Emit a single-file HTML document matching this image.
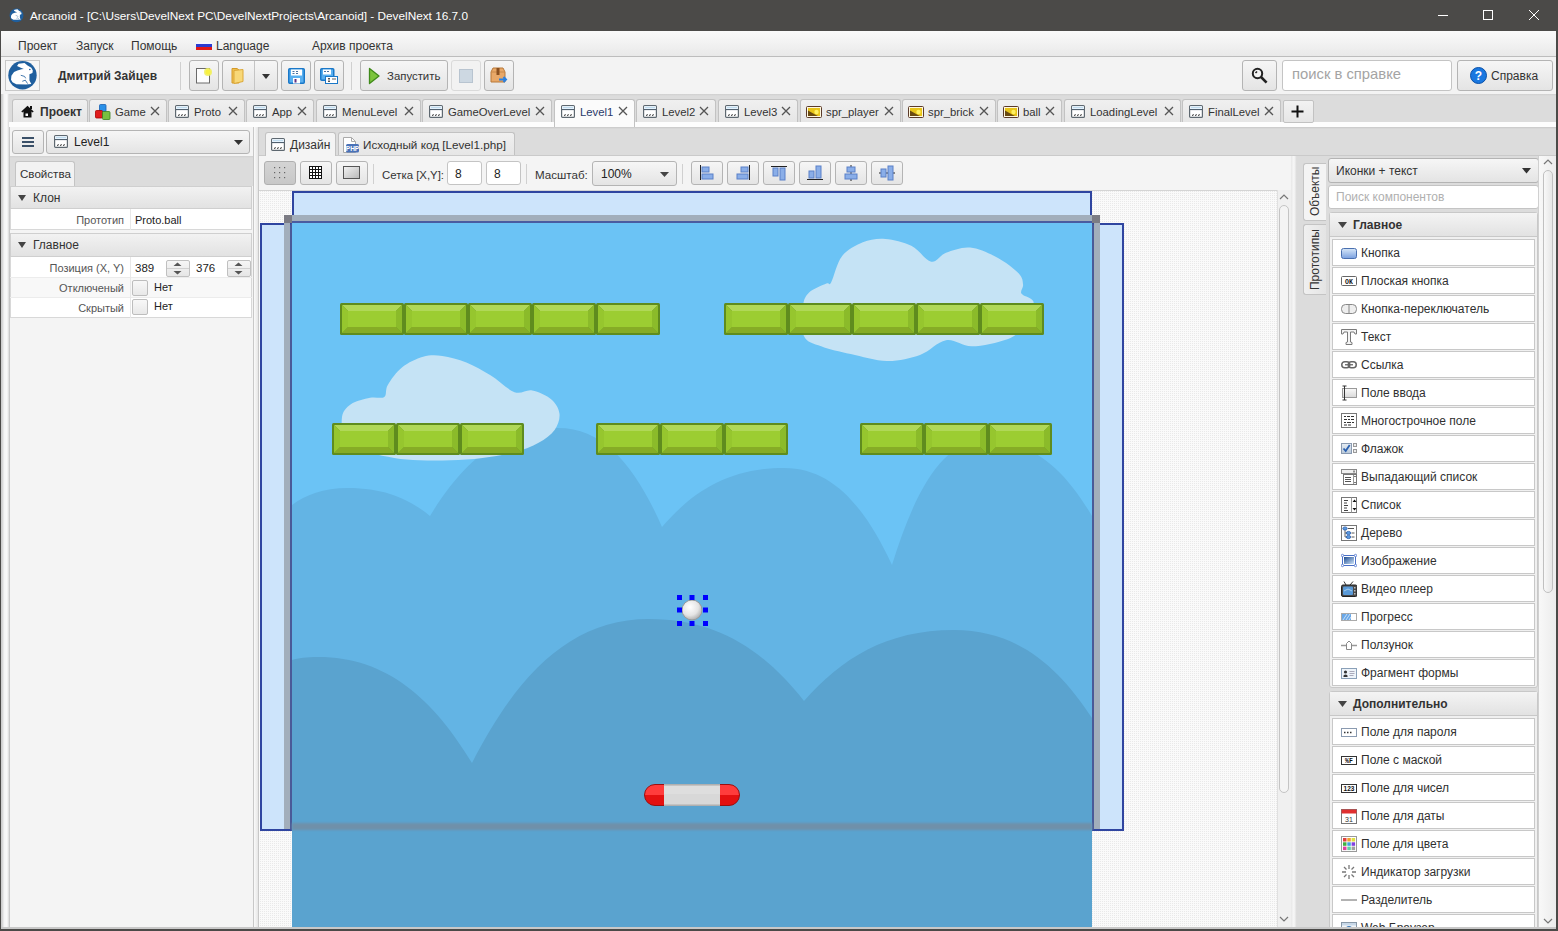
<!DOCTYPE html><html><head><meta charset="utf-8"><style>

*{box-sizing:border-box;margin:0;padding:0}
html,body{width:1558px;height:931px;overflow:hidden;background:#f4f4f4;font-family:"Liberation Sans", sans-serif;font-size:12px;color:#222}
div,span,svg.a{position:absolute}
.t{white-space:nowrap;line-height:16px}
.btn{border:1px solid #b4b4b4;border-radius:3px;background:linear-gradient(#f6f6f6,#e4e4e4)}
.tab{border:1px solid #c2c2c2;border-bottom:none;border-radius:3px 3px 0 0;background:linear-gradient(#f0f0f0,#e6e6e6)}
.inp{border:1px solid #c4c4c4;border-radius:3px;background:#fff}
.item{border:1px solid #c8c8c8;background:#fff}

</style></head><body>
<div style="left:0px;top:0px;width:1558px;height:31px;background:#4b4a48"></div>
<svg class="a" style="left:8px;top:7px" width="18" height="17" viewBox="0 0 984 931"><circle cx="465" cy="460" r="378" fill="#1f5f9e"/><path d="M320 210 L360 150 L520 130 L600 200 L700 260 L740 330 L730 400 L650 430 L650 600 L700 690 L560 705 L300 695 L200 645 L160 580 L170 470 L240 370 L330 330 L440 300 L500 290 L420 260Z" fill="#fff"/><circle cx="660" cy="305" r="22" fill="#1f5f9e"/><path d="M420 460 L520 490 L550 540 M460 620 L540 590 L600 680" stroke="#1f5f9e" stroke-width="22" fill="none"/></svg>
<div class="t" style="left:30px;top:8px;width:600px;height:16px;color:#fff;font-size:11.8px">Arcanoid - [C:\Users\DevelNext PC\DevelNextProjects\Arcanoid] - DevelNext 16.7.0</div>
<svg class="a" style="left:1436px;top:9px" width="120" height="14" viewBox="0 0 120 14"><line x1="2" y1="6.5" x2="12" y2="6.5" stroke="#fff" stroke-width="1"/><rect x="47.5" y="1.5" width="9" height="9" fill="none" stroke="#fff"/><path d="M93 1L103 11M103 1L93 11" stroke="#fff" stroke-width="1"/></svg>
<div style="left:0px;top:31px;width:1px;height:900px;background:#4b4a48"></div>
<div style="left:1557px;top:31px;width:1px;height:900px;background:#4b4a48"></div>
<div style="left:0px;top:929px;width:1558px;height:2px;background:#4b4a48"></div>
<div style="left:1px;top:31px;width:1556px;height:26px;background:linear-gradient(#fafafa,#e9e9e9);border-bottom:1px solid #bdbdbd"></div>
<div class="t" style="left:18px;top:38px;width:200px;height:14px;color:#333">Проект</div>
<div class="t" style="left:76px;top:38px;width:200px;height:14px;color:#333">Запуск</div>
<div class="t" style="left:131px;top:38px;width:200px;height:14px;color:#333">Помощь</div>
<div class="t" style="left:216px;top:38px;width:200px;height:14px;color:#333">Language</div>
<div class="t" style="left:312px;top:38px;width:200px;height:14px;color:#333">Архив проекта</div>
<svg class="a" style="left:196px;top:42px" width="16" height="8" viewBox="0 0 16 8"><rect width="16" height="2" y="0" fill="#f4f4ff"/><rect width="16" height="3" y="2" fill="#2a3ad0"/><rect width="16" height="3" y="5" fill="#e01818"/></svg>
<div style="left:1px;top:57px;width:1556px;height:37px;background:#f3f3f3"></div>
<div style="left:5px;top:60px;width:35px;height:31px;border:1px solid #c8c8c8;background:#f6f6f6"></div>
<svg class="a" style="left:5px;top:58px" width="37" height="35" viewBox="0 0 984 931"><circle cx="465" cy="460" r="378" fill="#1f5f9e"/><path d="M320 210 L360 150 L520 130 L600 200 L700 260 L740 330 L730 400 L650 430 L650 600 L700 690 L560 705 L300 695 L200 645 L160 580 L170 470 L240 370 L330 330 L440 300 L500 290 L420 260Z" fill="#fff"/><circle cx="660" cy="305" r="22" fill="#1f5f9e"/><path d="M420 460 L520 490 L550 540 M460 620 L540 590 L600 680" stroke="#1f5f9e" stroke-width="22" fill="none"/></svg>
<div class="t" style="left:58px;top:68px;width:120px;height:16px;font-weight:bold;color:#333;font-size:12px">Дмитрий Зайцев</div>
<div style="left:180px;top:62px;width:1px;height:28px;background:#d0d0d0"></div>
<div style="left:351px;top:62px;width:1px;height:28px;background:#d0d0d0"></div>
<div class="btn" style="left:189px;top:60px;width:30px;height:31px;"></div>
<div class="btn" style="left:281px;top:60px;width:30px;height:31px;"></div>
<div class="btn" style="left:314px;top:60px;width:30px;height:31px;"></div>
<div class="btn" style="left:484px;top:60px;width:30px;height:31px;"></div>
<div class="btn" style="left:222px;top:60px;width:56px;height:31px;"></div>
<div style="left:254px;top:61px;width:1px;height:29px;background:#c4c4c4"></div>
<svg class="a" style="left:262px;top:74px" width="8" height="5"><path d="M0 0h8L4 5z" fill="#333"/></svg>
<div class="btn" style="left:360px;top:60px;width:88px;height:31px;"></div>
<svg class="a" style="left:368px;top:67px" width="13" height="18" viewBox="0 0 13 18"><path d="M1.5 1.5L11 9L1.5 16.5Z" fill="#7cc43c" stroke="#3f8a1a" stroke-width="1.3" stroke-linejoin="round"/></svg>
<div class="t" style="left:387px;top:68px;width:60px;height:16px;color:#333;font-size:11.4px">Запустить</div>
<div style="left:451px;top:60px;width:30px;height:31px;border:1px solid #dadada;border-radius:3px;background:#f2f2f2"></div>
<div style="left:459px;top:69px;width:14px;height:14px;background:#cdd8e2;border:1px solid #b8c4d0"></div>
<svg class="a" style="left:195px;top:67px" width="19" height="17" viewBox="0 0 19 17"><rect x="1.5" y="1.5" width="13" height="14.5" fill="#fdfdfd" stroke="#6a6a6a"/><circle cx="13" cy="5" r="4" fill="#f0f060" opacity="0.9"/><circle cx="13" cy="5" r="2.5" fill="#f8f040"/></svg>
<svg class="a" style="left:231px;top:67px" width="14" height="17" viewBox="0 0 14 17"><path d="M1 1.5h5l2 1.5v13H1z" fill="#f0c050" stroke="#d49a28"/><path d="M3 3.5l9-1v12l-9 2z" fill="#f8d878" stroke="#dca838"/></svg>
<svg class="a" style="left:288px;top:68px" width="17" height="16" viewBox="0 0 17 16"><rect x="0.75" y="0.75" width="15.5" height="14.5" rx="1" fill="#5ab0f0" stroke="#1a78c8" stroke-width="1.5"/><rect x="3" y="1.5" width="11" height="6" fill="#fff"/><path d="M4.5 3.5h2M8 3.5h2M4.5 5.5h2M8 5.5h2" stroke="#4a70a0"/><rect x="5" y="10" width="7" height="5.5" fill="#fff"/><rect x="6.5" y="11" width="2" height="3.5" fill="#603080"/></svg>
<svg class="a" style="left:320px;top:68px" width="18" height="16" viewBox="0 0 18 16"><rect x="0.75" y="0.75" width="13" height="11.5" rx="1" fill="#5ab0f0" stroke="#1a78c8" stroke-width="1.5"/><rect x="3" y="1.5" width="8" height="5" fill="#fff"/><path d="M4 3.5h2M7 3.5h2" stroke="#4a70a0"/><rect x="5.5" y="8.5" width="12" height="7" fill="#fff" stroke="#1a78c8"/><path d="M8 10.5h2M9 10.5v3M8 13.5h2M12 11h4" stroke="#333" stroke-width="0.8"/></svg>
<svg class="a" style="left:490px;top:67px" width="18" height="17" viewBox="0 0 18 17"><path d="M1 5L3 1H13L15 5V15H1Z" fill="#e8a868" stroke="#b87838"/><path d="M1 5H15" stroke="#c88848"/><rect x="6.5" y="1" width="3" height="7" fill="#8a5020"/><path d="M9 12.5H16M13.5 10L16 12.5L13.5 15" stroke="#2a80e0" stroke-width="2" fill="none"/></svg>
<div class="btn" style="left:1242px;top:60px;width:35px;height:31px;"></div>
<svg class="a" style="left:1251px;top:67px" width="18" height="18" viewBox="0 0 18 18"><circle cx="6.5" cy="6.5" r="4.7" fill="#f4f4f4" stroke="#222" stroke-width="2"/><path d="M4.5 6l1.5-1.5" stroke="#222" stroke-width="1.6"/><path d="M10 10l5.6 5.6" stroke="#222" stroke-width="2.6"/></svg>
<div class="inp" style="left:1282px;top:60px;width:170px;height:31px;"></div>
<div class="t" style="left:1292px;top:65px;width:150px;height:18px;color:#a4a4a4;font-size:14.8px;line-height:18px">поиск в справке</div>
<div class="btn" style="left:1457px;top:60px;width:96px;height:31px;"></div>
<svg class="a" style="left:1470px;top:67px" width="17" height="17" viewBox="0 0 17 17"><circle cx="8.5" cy="8.5" r="8" fill="#1a78e0" stroke="#0a50a8"/><text x="8.5" y="13" font-size="12" font-weight="bold" text-anchor="middle" fill="#fff" font-family="Liberation Sans">?</text></svg>
<div class="t" style="left:1491px;top:68px;width:60px;height:16px;color:#333">Справка</div>
<div style="left:1px;top:94px;width:1556px;height:28px;background:linear-gradient(#cfcfcf,#dcdcdc 2px,#dcdcdc)"></div>
<div style="left:1px;top:122px;width:1556px;height:5px;background:#fdfdfd"></div>
<div style="left:1px;top:94px;width:8px;height:835px;background:linear-gradient(90deg,#c8c8c8 0,#dedede 2px,#f4f4f4 3px,#fafafa 6px,#d8d8d8 8px)"></div>
<div class="tab" style="left:12px;top:99px;width:76px;height:23px;"></div>
<svg class="a" style="left:21px;top:105px" width="13" height="13" viewBox="0 0 13 13"><path d="M6.5 0.8L0.3 6.6l1 1L2.5 6.5V12.5h8V6.5l1.2 1.1 1-1z" fill="#111"/><rect x="4.5" y="8.5" width="2.5" height="2.5" fill="#fff"/><rect x="9" y="1" width="2" height="3" fill="#111"/></svg>
<div class="t" style="left:40px;top:104px;width:60px;height:16px;font-weight:bold;color:#333">Проект</div>
<div class="tab" style="left:89px;top:99px;width:78px;height:23px;"></div>
<svg class="a" style="left:95px;top:104px" width="16" height="16" viewBox="0 0 16 16"><rect x="4.5" y="0.5" width="6.5" height="7" rx="1" fill="#2a90e8" stroke="#1a60b0" stroke-width="0.8"/><rect x="0.5" y="6.5" width="7" height="7.5" rx="1" fill="#e01c1c" stroke="#a00" stroke-width="0.8"/><rect x="7.5" y="7.5" width="7.5" height="8" rx="1" fill="#78c040" stroke="#3a8020" stroke-width="0.8"/></svg>
<div class="t" style="left:115px;top:104px;width:120px;height:16px;color:#333;font-size:11.3px">Game</div>
<svg class="a" style="left:150px;top:106px" width="10" height="10" viewBox="0 0 10 10"><path d="M1 1L9 9M9 1L1 9" stroke="#555" stroke-width="1.3"/></svg>
<div class="tab" style="left:168px;top:99px;width:77px;height:23px;"></div>
<svg class="a" style="left:175px;top:105px" width="14" height="13" viewBox="0 0 14 13"><rect x="0.6" y="0.6" width="12.8" height="11.8" rx="1" fill="#fff" stroke="#5e6870" stroke-width="1.2"/><rect x="1.2" y="1.2" width="11.6" height="3" fill="#eaf6ff"/><path d="M2 2.6H12" stroke="#b0d0e8" stroke-width="0.8"/><line x1="1" y1="4.6" x2="13" y2="4.6" stroke="#3e5060" stroke-width="1"/><path d="M3.5 10.5l0.9-0.9M6.5 10.5l0.9-0.9M9.5 10.5l0.9-0.9" stroke="#555" stroke-width="1.1" stroke-linecap="round"/></svg>
<div class="t" style="left:194px;top:104px;width:120px;height:16px;color:#333;font-size:11.3px">Proto</div>
<svg class="a" style="left:228px;top:106px" width="10" height="10" viewBox="0 0 10 10"><path d="M1 1L9 9M9 1L1 9" stroke="#555" stroke-width="1.3"/></svg>
<div class="tab" style="left:246px;top:99px;width:68px;height:23px;"></div>
<svg class="a" style="left:253px;top:105px" width="14" height="13" viewBox="0 0 14 13"><rect x="0.6" y="0.6" width="12.8" height="11.8" rx="1" fill="#fff" stroke="#5e6870" stroke-width="1.2"/><rect x="1.2" y="1.2" width="11.6" height="3" fill="#eaf6ff"/><path d="M2 2.6H12" stroke="#b0d0e8" stroke-width="0.8"/><line x1="1" y1="4.6" x2="13" y2="4.6" stroke="#3e5060" stroke-width="1"/><path d="M3.5 10.5l0.9-0.9M6.5 10.5l0.9-0.9M9.5 10.5l0.9-0.9" stroke="#555" stroke-width="1.1" stroke-linecap="round"/></svg>
<div class="t" style="left:272px;top:104px;width:120px;height:16px;color:#333;font-size:11.3px">App</div>
<svg class="a" style="left:297px;top:106px" width="10" height="10" viewBox="0 0 10 10"><path d="M1 1L9 9M9 1L1 9" stroke="#555" stroke-width="1.3"/></svg>
<div class="tab" style="left:316px;top:99px;width:105px;height:23px;"></div>
<svg class="a" style="left:323px;top:105px" width="14" height="13" viewBox="0 0 14 13"><rect x="0.6" y="0.6" width="12.8" height="11.8" rx="1" fill="#fff" stroke="#5e6870" stroke-width="1.2"/><rect x="1.2" y="1.2" width="11.6" height="3" fill="#eaf6ff"/><path d="M2 2.6H12" stroke="#b0d0e8" stroke-width="0.8"/><line x1="1" y1="4.6" x2="13" y2="4.6" stroke="#3e5060" stroke-width="1"/><path d="M3.5 10.5l0.9-0.9M6.5 10.5l0.9-0.9M9.5 10.5l0.9-0.9" stroke="#555" stroke-width="1.1" stroke-linecap="round"/></svg>
<div class="t" style="left:342px;top:104px;width:120px;height:16px;color:#333;font-size:11.3px">MenuLevel</div>
<svg class="a" style="left:404px;top:106px" width="10" height="10" viewBox="0 0 10 10"><path d="M1 1L9 9M9 1L1 9" stroke="#555" stroke-width="1.3"/></svg>
<div class="tab" style="left:422px;top:99px;width:130px;height:23px;"></div>
<svg class="a" style="left:429px;top:105px" width="14" height="13" viewBox="0 0 14 13"><rect x="0.6" y="0.6" width="12.8" height="11.8" rx="1" fill="#fff" stroke="#5e6870" stroke-width="1.2"/><rect x="1.2" y="1.2" width="11.6" height="3" fill="#eaf6ff"/><path d="M2 2.6H12" stroke="#b0d0e8" stroke-width="0.8"/><line x1="1" y1="4.6" x2="13" y2="4.6" stroke="#3e5060" stroke-width="1"/><path d="M3.5 10.5l0.9-0.9M6.5 10.5l0.9-0.9M9.5 10.5l0.9-0.9" stroke="#555" stroke-width="1.1" stroke-linecap="round"/></svg>
<div class="t" style="left:448px;top:104px;width:120px;height:16px;color:#333;font-size:11.3px">GameOverLevel</div>
<svg class="a" style="left:535px;top:106px" width="10" height="10" viewBox="0 0 10 10"><path d="M1 1L9 9M9 1L1 9" stroke="#555" stroke-width="1.3"/></svg>
<div class="tab" style="left:554px;top:99px;width:81px;height:28px;background:#fbfbfb;height:28px"></div>
<svg class="a" style="left:561px;top:105px" width="14" height="13" viewBox="0 0 14 13"><rect x="0.6" y="0.6" width="12.8" height="11.8" rx="1" fill="#fff" stroke="#5e6870" stroke-width="1.2"/><rect x="1.2" y="1.2" width="11.6" height="3" fill="#eaf6ff"/><path d="M2 2.6H12" stroke="#b0d0e8" stroke-width="0.8"/><line x1="1" y1="4.6" x2="13" y2="4.6" stroke="#3e5060" stroke-width="1"/><path d="M3.5 10.5l0.9-0.9M6.5 10.5l0.9-0.9M9.5 10.5l0.9-0.9" stroke="#555" stroke-width="1.1" stroke-linecap="round"/></svg>
<div class="t" style="left:580px;top:104px;width:120px;height:16px;color:#2a3a6a;font-size:11.3px">Level1</div>
<svg class="a" style="left:618px;top:106px" width="10" height="10" viewBox="0 0 10 10"><path d="M1 1L9 9M9 1L1 9" stroke="#555" stroke-width="1.3"/></svg>
<div class="tab" style="left:636px;top:99px;width:80px;height:23px;"></div>
<svg class="a" style="left:643px;top:105px" width="14" height="13" viewBox="0 0 14 13"><rect x="0.6" y="0.6" width="12.8" height="11.8" rx="1" fill="#fff" stroke="#5e6870" stroke-width="1.2"/><rect x="1.2" y="1.2" width="11.6" height="3" fill="#eaf6ff"/><path d="M2 2.6H12" stroke="#b0d0e8" stroke-width="0.8"/><line x1="1" y1="4.6" x2="13" y2="4.6" stroke="#3e5060" stroke-width="1"/><path d="M3.5 10.5l0.9-0.9M6.5 10.5l0.9-0.9M9.5 10.5l0.9-0.9" stroke="#555" stroke-width="1.1" stroke-linecap="round"/></svg>
<div class="t" style="left:662px;top:104px;width:120px;height:16px;color:#333;font-size:11.3px">Level2</div>
<svg class="a" style="left:699px;top:106px" width="10" height="10" viewBox="0 0 10 10"><path d="M1 1L9 9M9 1L1 9" stroke="#555" stroke-width="1.3"/></svg>
<div class="tab" style="left:718px;top:99px;width:80px;height:23px;"></div>
<svg class="a" style="left:725px;top:105px" width="14" height="13" viewBox="0 0 14 13"><rect x="0.6" y="0.6" width="12.8" height="11.8" rx="1" fill="#fff" stroke="#5e6870" stroke-width="1.2"/><rect x="1.2" y="1.2" width="11.6" height="3" fill="#eaf6ff"/><path d="M2 2.6H12" stroke="#b0d0e8" stroke-width="0.8"/><line x1="1" y1="4.6" x2="13" y2="4.6" stroke="#3e5060" stroke-width="1"/><path d="M3.5 10.5l0.9-0.9M6.5 10.5l0.9-0.9M9.5 10.5l0.9-0.9" stroke="#555" stroke-width="1.1" stroke-linecap="round"/></svg>
<div class="t" style="left:744px;top:104px;width:120px;height:16px;color:#333;font-size:11.3px">Level3</div>
<svg class="a" style="left:781px;top:106px" width="10" height="10" viewBox="0 0 10 10"><path d="M1 1L9 9M9 1L1 9" stroke="#555" stroke-width="1.3"/></svg>
<div class="tab" style="left:800px;top:99px;width:101px;height:23px;"></div>
<svg class="a" style="left:806px;top:106px" width="16" height="12" viewBox="0 0 16 12"><rect x="0.5" y="0.5" width="15" height="11" rx="1" fill="#fff8e0" stroke="#5a3a2a"/><rect x="2" y="2" width="12" height="8" fill="#e8c418"/><path d="M2 4.5L9 8.5L12 10H2Z" fill="#6a4a10"/><circle cx="10.5" cy="6" r="2.2" fill="#fff060"/></svg>
<div class="t" style="left:826px;top:104px;width:120px;height:16px;color:#333;font-size:11.3px">spr_player</div>
<svg class="a" style="left:884px;top:106px" width="10" height="10" viewBox="0 0 10 10"><path d="M1 1L9 9M9 1L1 9" stroke="#555" stroke-width="1.3"/></svg>
<div class="tab" style="left:902px;top:99px;width:94px;height:23px;"></div>
<svg class="a" style="left:908px;top:106px" width="16" height="12" viewBox="0 0 16 12"><rect x="0.5" y="0.5" width="15" height="11" rx="1" fill="#fff8e0" stroke="#5a3a2a"/><rect x="2" y="2" width="12" height="8" fill="#e8c418"/><path d="M2 4.5L9 8.5L12 10H2Z" fill="#6a4a10"/><circle cx="10.5" cy="6" r="2.2" fill="#fff060"/></svg>
<div class="t" style="left:928px;top:104px;width:120px;height:16px;color:#333;font-size:11.3px">spr_brick</div>
<svg class="a" style="left:979px;top:106px" width="10" height="10" viewBox="0 0 10 10"><path d="M1 1L9 9M9 1L1 9" stroke="#555" stroke-width="1.3"/></svg>
<div class="tab" style="left:997px;top:99px;width:65px;height:23px;"></div>
<svg class="a" style="left:1003px;top:106px" width="16" height="12" viewBox="0 0 16 12"><rect x="0.5" y="0.5" width="15" height="11" rx="1" fill="#fff8e0" stroke="#5a3a2a"/><rect x="2" y="2" width="12" height="8" fill="#e8c418"/><path d="M2 4.5L9 8.5L12 10H2Z" fill="#6a4a10"/><circle cx="10.5" cy="6" r="2.2" fill="#fff060"/></svg>
<div class="t" style="left:1023px;top:104px;width:120px;height:16px;color:#333;font-size:11.3px">ball</div>
<svg class="a" style="left:1045px;top:106px" width="10" height="10" viewBox="0 0 10 10"><path d="M1 1L9 9M9 1L1 9" stroke="#555" stroke-width="1.3"/></svg>
<div class="tab" style="left:1064px;top:99px;width:117px;height:23px;"></div>
<svg class="a" style="left:1071px;top:105px" width="14" height="13" viewBox="0 0 14 13"><rect x="0.6" y="0.6" width="12.8" height="11.8" rx="1" fill="#fff" stroke="#5e6870" stroke-width="1.2"/><rect x="1.2" y="1.2" width="11.6" height="3" fill="#eaf6ff"/><path d="M2 2.6H12" stroke="#b0d0e8" stroke-width="0.8"/><line x1="1" y1="4.6" x2="13" y2="4.6" stroke="#3e5060" stroke-width="1"/><path d="M3.5 10.5l0.9-0.9M6.5 10.5l0.9-0.9M9.5 10.5l0.9-0.9" stroke="#555" stroke-width="1.1" stroke-linecap="round"/></svg>
<div class="t" style="left:1090px;top:104px;width:120px;height:16px;color:#333;font-size:11.3px">LoadingLevel</div>
<svg class="a" style="left:1164px;top:106px" width="10" height="10" viewBox="0 0 10 10"><path d="M1 1L9 9M9 1L1 9" stroke="#555" stroke-width="1.3"/></svg>
<div class="tab" style="left:1182px;top:99px;width:99px;height:23px;"></div>
<svg class="a" style="left:1189px;top:105px" width="14" height="13" viewBox="0 0 14 13"><rect x="0.6" y="0.6" width="12.8" height="11.8" rx="1" fill="#fff" stroke="#5e6870" stroke-width="1.2"/><rect x="1.2" y="1.2" width="11.6" height="3" fill="#eaf6ff"/><path d="M2 2.6H12" stroke="#b0d0e8" stroke-width="0.8"/><line x1="1" y1="4.6" x2="13" y2="4.6" stroke="#3e5060" stroke-width="1"/><path d="M3.5 10.5l0.9-0.9M6.5 10.5l0.9-0.9M9.5 10.5l0.9-0.9" stroke="#555" stroke-width="1.1" stroke-linecap="round"/></svg>
<div class="t" style="left:1208px;top:104px;width:120px;height:16px;color:#333;font-size:11.3px">FinalLevel</div>
<svg class="a" style="left:1264px;top:106px" width="10" height="10" viewBox="0 0 10 10"><path d="M1 1L9 9M9 1L1 9" stroke="#555" stroke-width="1.3"/></svg>
<div style="left:1283px;top:100px;width:31px;height:23px;background:linear-gradient(#f2f2f2,#e6e6e6);border:1px solid #c2c2c2;border-radius:2px"></div>
<svg class="a" style="left:1291px;top:105px" width="13" height="13" viewBox="0 0 13 13"><path d="M6.5 0.5v12M0.5 6.5h12" stroke="#111" stroke-width="2"/></svg>
<div style="left:9px;top:127px;width:245px;height:802px;background:#f4f4f4;border-left:1px solid #c8c8c8;border-right:1px solid #c8c8c8"></div>
<div style="left:254px;top:127px;width:5px;height:802px;background:linear-gradient(90deg,#fafafa,#e6e6e6 80%,#c8c8c8 80%)"></div>
<div class="btn" style="left:12px;top:130px;width:32px;height:24px;"></div>
<svg class="a" style="left:22px;top:137px" width="12" height="11" viewBox="0 0 12 11"><path d="M0 1h12M0 5h12M0 9h12" stroke="#3a5068" stroke-width="1.8"/></svg>
<div class="btn" style="left:46px;top:130px;width:204px;height:24px;"></div>
<svg class="a" style="left:54px;top:135px" width="14" height="13" viewBox="0 0 14 13"><rect x="0.6" y="0.6" width="12.8" height="11.8" rx="1" fill="#fff" stroke="#5e6870" stroke-width="1.2"/><rect x="1.2" y="1.2" width="11.6" height="3" fill="#eaf6ff"/><path d="M2 2.6H12" stroke="#b0d0e8" stroke-width="0.8"/><line x1="1" y1="4.6" x2="13" y2="4.6" stroke="#3e5060" stroke-width="1"/><path d="M3.5 10.5l0.9-0.9M6.5 10.5l0.9-0.9M9.5 10.5l0.9-0.9" stroke="#555" stroke-width="1.1" stroke-linecap="round"/></svg>
<div class="t" style="left:74px;top:134px;width:100px;height:16px;color:#222">Level1</div>
<svg class="a" style="left:234px;top:140px" width="9" height="5"><path d="M0 0h9L4.5 5z" fill="#333"/></svg>
<div style="left:10px;top:155px;width:243px;height:31px;background:linear-gradient(#f4f4f4,#f4f4f4 1px,#d0d0d0 1px,#dcdcdc 3px,#dcdcdc)"></div>
<div style="left:15px;top:161px;width:60px;height:25px;background:#f2f2f2;border:1px solid #c4c4c4;border-bottom:none;border-radius:3px 3px 0 0"></div>
<div class="t" style="left:20px;top:166px;width:60px;height:16px;color:#333;font-size:11.6px">Свойства</div>
<div style="left:10px;top:186px;width:242px;height:23px;background:linear-gradient(#f2f2f2,#e2e2e2);border:1px solid #cfcfcf"></div>
<svg class="a" style="left:18px;top:195px" width="9" height="7"><path d="M0 0h8L4 6z" fill="#444"/></svg>
<div class="t" style="left:33px;top:190px;width:100px;height:16px;color:#333">Клон</div>
<div style="left:10px;top:209px;width:242px;height:21px;background:#fff;border-left:1px solid #d8d8d8;border-right:1px solid #d8d8d8;border-bottom:1px solid #d8d8d8"></div>
<div style="left:130px;top:209px;width:1px;height:21px;background:#e8e8e8"></div>
<div class="t" style="left:24px;top:212px;width:100px;height:16px;color:#555;text-align:right;font-size:11px">Прототип</div>
<div class="t" style="left:135px;top:212px;width:100px;height:16px;color:#222;font-size:11px">Proto.ball</div>
<div style="left:10px;top:233px;width:242px;height:24px;background:linear-gradient(#f2f2f2,#e2e2e2);border:1px solid #cfcfcf"></div>
<svg class="a" style="left:18px;top:242px" width="9" height="7"><path d="M0 0h8L4 6z" fill="#444"/></svg>
<div class="t" style="left:33px;top:237px;width:100px;height:16px;color:#333">Главное</div>
<div style="left:10px;top:257px;width:242px;height:61px;background:#fff;border-left:1px solid #d8d8d8;border-right:1px solid #d8d8d8;border-bottom:1px solid #d8d8d8"></div>
<div style="left:11px;top:278px;width:240px;height:19px;background:#f8f8f8"></div>
<div style="left:10px;top:277px;width:242px;height:1px;background:#ececec"></div>
<div style="left:10px;top:297px;width:242px;height:1px;background:#ececec"></div>
<div style="left:130px;top:257px;width:1px;height:61px;background:#e8e8e8"></div>
<div class="t" style="left:14px;top:260px;width:110px;height:16px;color:#555;text-align:right;font-size:11px">Позиция (X, Y)</div>
<div class="t" style="left:14px;top:280px;width:110px;height:16px;color:#555;text-align:right;font-size:11px">Отключеный</div>
<div class="t" style="left:14px;top:300px;width:110px;height:16px;color:#555;text-align:right;font-size:11px">Скрытый</div>
<div class="t" style="left:135px;top:260px;width:30px;height:16px;color:#222;font-size:11.5px">389</div>
<div class="t" style="left:196px;top:260px;width:30px;height:16px;color:#222;font-size:11.5px">376</div>
<div style="left:166px;top:260px;width:24px;height:17px;border:1px solid #c0c0c0;border-radius:2px;background:linear-gradient(#f6f6f6,#e6e6e6)"></div>
<div style="left:167px;top:268px;width:22px;height:1px;background:#d0d0d0"></div>
<svg class="a" style="left:173px;top:262px" width="9" height="13"><path d="M0.5 4L4.5 0.5L8.5 4z M0.5 9L4.5 12.5L8.5 9z" fill="#555"/></svg>
<div style="left:227px;top:260px;width:24px;height:17px;border:1px solid #c0c0c0;border-radius:2px;background:linear-gradient(#f6f6f6,#e6e6e6)"></div>
<div style="left:228px;top:268px;width:22px;height:1px;background:#d0d0d0"></div>
<svg class="a" style="left:234px;top:262px" width="9" height="13"><path d="M0.5 4L4.5 0.5L8.5 4z M0.5 9L4.5 12.5L8.5 9z" fill="#555"/></svg>
<div style="left:132px;top:280px;width:16px;height:16px;border:1px solid #bdbdbd;border-radius:2px;background:linear-gradient(#f8f8f8,#e8e8e8)"></div>
<div class="t" style="left:154px;top:279px;width:30px;height:16px;color:#222;font-size:11px">Нет</div>
<div style="left:132px;top:299px;width:16px;height:16px;border:1px solid #bdbdbd;border-radius:2px;background:linear-gradient(#f8f8f8,#e8e8e8)"></div>
<div class="t" style="left:154px;top:298px;width:30px;height:16px;color:#222;font-size:11px">Нет</div>
<div style="left:259px;top:127px;width:1298px;height:29px;background:linear-gradient(#c8c8c8,#dcdcdc 2px,#dcdcdc);border-bottom:1px solid #cacaca"></div>
<div class="tab" style="left:265px;top:132px;width:71px;height:25px;background:#f4f4f4"></div>
<svg class="a" style="left:271px;top:138px" width="14" height="13" viewBox="0 0 14 13"><rect x="0.6" y="0.6" width="12.8" height="11.8" rx="1" fill="#fff" stroke="#5e6870" stroke-width="1.2"/><rect x="1.2" y="1.2" width="11.6" height="3" fill="#eaf6ff"/><path d="M2 2.6H12" stroke="#b0d0e8" stroke-width="0.8"/><line x1="1" y1="4.6" x2="13" y2="4.6" stroke="#3e5060" stroke-width="1"/><path d="M3.5 10.5l0.9-0.9M6.5 10.5l0.9-0.9M9.5 10.5l0.9-0.9" stroke="#555" stroke-width="1.1" stroke-linecap="round"/></svg>
<div class="t" style="left:290px;top:137px;width:60px;height:16px;color:#333">Дизайн</div>
<div class="tab" style="left:338px;top:132px;width:177px;height:23px;"></div>
<svg class="a" style="left:343px;top:137px" width="17" height="16" viewBox="0 0 17 16"><path d="M0.5 0.5h8l4 4v11H0.5z" fill="#fff" stroke="#aaa"/><path d="M8.5 0.5v4h4" fill="none" stroke="#aaa"/><rect x="3" y="7" width="13" height="8.5" rx="1.5" fill="#4a72b8"/><text x="9.5" y="14" font-size="6.5" font-weight="bold" text-anchor="middle" fill="#fff" font-family="Liberation Sans">PHP</text></svg>
<div class="t" style="left:363px;top:136.5px;width:160px;height:16px;color:#333;font-size:11.7px">Исходный код [Level1.php]</div>
<div style="left:259px;top:156px;width:1032px;height:35px;background:#f4f4f4;border-bottom:1px solid #d4d4d4"></div>
<div style="left:264px;top:161px;width:32px;height:24px;border:1px solid #b0b0b0;border-radius:3px;background:linear-gradient(#d4d4d4,#c8c8c8)"></div>
<svg class="a" style="left:273px;top:166px" width="14" height="14"><g fill="#666"><rect x="1" y="1" width="1.2" height="1.2"/><rect x="1" y="6" width="1.2" height="1.2"/><rect x="1" y="11" width="1.2" height="1.2"/><rect x="6" y="1" width="1.2" height="1.2"/><rect x="6" y="6" width="1.2" height="1.2"/><rect x="6" y="11" width="1.2" height="1.2"/><rect x="11" y="1" width="1.2" height="1.2"/><rect x="11" y="6" width="1.2" height="1.2"/><rect x="11" y="11" width="1.2" height="1.2"/></g></svg>
<div class="btn" style="left:300px;top:161px;width:32px;height:24px;"></div>
<svg class="a" style="left:309px;top:166px" width="13" height="13" viewBox="0 0 13 13"><rect x="0.5" y="0.5" width="12" height="12" fill="#fff" stroke="#111"/><path d="M3.5 0v13M6.5 0v13M9.5 0v13M0 3.5h13M0 6.5h13M0 9.5h13" stroke="#111"/></svg>
<div class="btn" style="left:336px;top:161px;width:32px;height:24px;"></div>
<svg class="a" style="left:343px;top:166px" width="17" height="13" viewBox="0 0 17 13"><rect x="0.5" y="0.5" width="16" height="12" fill="url(#g1)" stroke="#555"/><defs><linearGradient id="g1" x1="0" y1="0" x2="1" y2="1"><stop offset="0" stop-color="#f4f4f4"/><stop offset="1" stop-color="#b8b8b8"/></linearGradient></defs></svg>
<div style="left:373px;top:164px;width:1px;height:20px;background:#d0d0d0"></div>
<div class="t" style="left:382px;top:167px;width:70px;height:16px;color:#333;font-size:11.4px">Сетка [X,Y]:</div>
<div class="inp" style="left:447px;top:161px;width:35px;height:24px;"></div>
<div class="t" style="left:455px;top:166px;width:20px;height:16px;color:#222">8</div>
<div class="inp" style="left:486px;top:161px;width:35px;height:24px;"></div>
<div class="t" style="left:494px;top:166px;width:20px;height:16px;color:#222">8</div>
<div style="left:526px;top:164px;width:1px;height:20px;background:#d0d0d0"></div>
<div class="t" style="left:535px;top:167px;width:60px;height:16px;color:#333;font-size:11.6px">Масштаб:</div>
<div class="btn" style="left:592px;top:161px;width:85px;height:25px;"></div>
<div class="t" style="left:601px;top:166px;width:40px;height:16px;color:#222">100%</div>
<svg class="a" style="left:660px;top:172px" width="9" height="5"><path d="M0 0h9L4.5 5z" fill="#444"/></svg>
<div style="left:682px;top:164px;width:1px;height:20px;background:#d0d0d0"></div>
<div class="btn" style="left:691px;top:161px;width:32px;height:24px;"></div>
<svg class="a" style="left:698px;top:164px" width="18" height="18" viewBox="0 0 18 18"><path d="M2.5 1v15" stroke="#222"/><rect x="4" y="3" width="7" height="5" fill="#8aaee8" stroke="#5a80c8"/><rect x="4" y="10" width="11" height="5" fill="#8aaee8" stroke="#5a80c8"/></svg>
<div class="btn" style="left:727px;top:161px;width:32px;height:24px;"></div>
<svg class="a" style="left:734px;top:164px" width="18" height="18" viewBox="0 0 18 18"><path d="M15.5 1v15" stroke="#222"/><rect x="7" y="3" width="7" height="5" fill="#8aaee8" stroke="#5a80c8"/><rect x="3" y="10" width="11" height="5" fill="#8aaee8" stroke="#5a80c8"/></svg>
<div class="btn" style="left:763px;top:161px;width:32px;height:24px;"></div>
<svg class="a" style="left:770px;top:164px" width="18" height="18" viewBox="0 0 18 18"><path d="M1 2.5h16" stroke="#222"/><rect x="3" y="4" width="5" height="8" fill="#8aaee8" stroke="#5a80c8"/><rect x="10" y="4" width="5" height="12" fill="#8aaee8" stroke="#5a80c8"/></svg>
<div class="btn" style="left:799px;top:161px;width:32px;height:24px;"></div>
<svg class="a" style="left:806px;top:164px" width="18" height="18" viewBox="0 0 18 18"><path d="M1 15.5h16" stroke="#222"/><rect x="3" y="7" width="5" height="7" fill="#8aaee8" stroke="#5a80c8"/><rect x="10" y="2" width="5" height="12" fill="#8aaee8" stroke="#5a80c8"/></svg>
<div class="btn" style="left:835px;top:161px;width:32px;height:24px;"></div>
<svg class="a" style="left:842px;top:164px" width="18" height="18" viewBox="0 0 18 18"><path d="M9 1v16" stroke="#222"/><rect x="5" y="3" width="8" height="5" fill="#8aaee8" stroke="#5a80c8"/><rect x="3" y="10" width="12" height="5" fill="#8aaee8" stroke="#5a80c8"/></svg>
<div class="btn" style="left:871px;top:161px;width:32px;height:24px;"></div>
<svg class="a" style="left:878px;top:164px" width="18" height="18" viewBox="0 0 18 18"><path d="M1 9h16" stroke="#222"/><rect x="3" y="5" width="5" height="8" fill="#8aaee8" stroke="#5a80c8"/><rect x="10" y="2" width="5" height="14" fill="#8aaee8" stroke="#5a80c8"/></svg>
<div style="left:259px;top:191px;width:1032px;height:738px;background-color:#fafafa;background-image:linear-gradient(90deg,rgba(255,255,255,0) 50%,rgba(255,255,255,0.0) 50%),conic-gradient(#e9e9e9 25%,transparent 0);background-size:2px 2px,2px 2px"></div>
<div style="left:1277px;top:190px;width:14px;height:739px;background:#f0f0f0;border-left:1px solid #e0e0e0"></div>
<div style="left:1279px;top:205px;width:10px;height:588px;border:1px solid #c4c4c4;border-radius:5px;background:#f4f4f4"></div>
<svg class="a" style="left:1279px;top:193px" width="10" height="7"><path d="M1 6L5 2L9 6" stroke="#777" fill="none" stroke-width="1.2"/></svg>
<svg class="a" style="left:1279px;top:916px" width="10" height="7"><path d="M1 1L5 5L9 1" stroke="#777" fill="none" stroke-width="1.2"/></svg>
<div style="left:1291px;top:156px;width:6px;height:773px;background:linear-gradient(90deg,#e8e8e8,#f8f8f8,#d8d8d8)"></div>
<svg class="a" style="left:292px;top:191px" width="800" height="736" viewBox="0 0 800 736"><rect width="800" height="737" fill="#6bc3f5"/><path d="M0.0 314.0 C14.0 303.8 30.8 297.0 56.0 297.0 C92.9 297.0 117.5 308.2 138.0 325.0 C170.0 272.2 208.4 237.0 266.0 237.0 C312.8 237.0 344.0 276.6 370.0 336.0 C400.5 300.6 437.1 277.0 492.0 277.0 C540.6 277.0 573.0 315.8 600.0 374.0 C623.2 299.0 651.1 249.0 693.0 249.0 C741.1 249.0 773.2 279.4 800.0 325.0 V736 H0Z" fill="#63b4e4"/><path d="M0.0 469.0 C6.5 467.2 14.3 466.0 26.0 466.0 C95.3 466.0 141.5 508.4 180.0 572.0 C224.2 485.6 277.4 428.0 357.0 428.0 C426.8 428.0 473.2 460.8 512.0 510.0 C549.5 467.4 594.5 439.0 662.0 439.0 C724.1 439.0 765.5 474.2 800.0 527.0 V736 H0Z" fill="#5aa3cf"/><g fill="#c5e3f5"><path d="M50.0 226.0 C50.8 220.1 54.2 216.4 58.9 213.2 C63.5 210.0 72.6 208.0 78.1 206.8 C83.7 205.6 89.3 208.1 92.2 206.0 C95.2 203.8 92.8 198.9 95.8 193.9 C98.8 189.0 104.3 181.0 110.2 176.3 C116.1 171.6 124.4 167.7 131.1 165.8 C137.8 164.0 143.1 164.1 150.3 165.0 C157.5 166.0 166.4 168.3 174.4 171.5 C182.4 174.7 190.4 179.4 198.5 184.3 C206.5 189.2 215.6 198.6 222.5 201.2 C229.5 203.7 234.0 198.3 240.2 199.5 C246.3 200.7 254.9 204.5 259.4 208.4 C264.0 212.2 266.9 217.7 267.5 222.8 C268.0 227.9 266.1 234.0 262.6 238.9 C259.2 243.7 253.3 248.0 246.6 251.7 C239.9 255.4 231.9 258.8 222.5 261.3 C213.2 263.9 201.1 265.6 190.4 266.9 C179.7 268.3 168.8 268.9 158.3 269.3 C147.9 269.7 137.2 269.7 127.9 269.3 C118.5 268.9 110.5 268.3 102.2 266.9 C93.9 265.6 86.1 264.4 78.1 261.3 C70.1 258.2 58.7 254.4 54.0 248.5 C49.4 242.6 49.2 231.9 50.0 226.0Z"/><path d="M511.9 144.9 C508.8 138.3 510.1 122.7 511.0 115.5 C511.9 108.2 513.2 105.4 517.1 101.6 C521.0 97.8 530.7 94.3 534.4 92.6 C538.1 90.8 536.6 95.8 539.2 91.2 C541.8 86.6 544.7 71.8 550.0 65.2 C555.3 58.6 563.6 54.2 570.8 51.3 C578.0 48.4 585.2 47.3 593.3 47.9 C601.4 48.4 611.7 51.0 619.3 54.8 C627.0 58.6 633.5 69.6 639.2 70.7 C645.0 71.9 647.5 64.1 654.0 61.7 C660.5 59.4 669.6 55.7 678.2 56.5 C686.9 57.4 697.9 62.6 706.0 66.9 C714.1 71.3 722.6 78.0 726.8 82.5 C731.0 87.0 730.7 90.5 731.1 93.8 C731.5 97.1 727.9 100.0 729.4 102.5 C730.8 104.9 737.9 106.4 739.8 108.5 C741.6 110.7 742.5 110.5 740.6 115.5 C738.8 120.4 732.8 132.5 728.5 138.0 C724.2 143.5 722.7 145.5 714.6 148.4 C706.5 151.3 690.1 155.2 680.0 155.3 C669.9 155.5 662.6 147.8 654.0 149.3 C645.3 150.7 637.8 160.5 628.0 164.0 C618.2 167.4 606.6 170.2 595.1 170.0 C583.5 169.9 569.6 165.6 558.7 163.1 C547.7 160.7 537.0 158.4 529.2 155.3 C521.4 152.3 514.9 151.6 511.9 144.9Z"/></g></svg>
<svg class="a" style="left:340px;top:303px" width="64" height="32" viewBox="0 0 64 32"><rect x="0" y="0" width="64" height="32" fill="#5f8c1e" rx="1.5"/><path d="M2 2H62L56 8H8Z" fill="#b0d858"/><path d="M2 30H62L56 24H8Z" fill="#86ac26"/><path d="M2 2L8 8V24L2 30Z" fill="#96c62e"/><path d="M62 2L56 8V24L62 30Z" fill="#8bbb2a"/><rect x="8" y="8" width="48" height="16" fill="#9ccd32"/></svg>
<svg class="a" style="left:404px;top:303px" width="64" height="32" viewBox="0 0 64 32"><rect x="0" y="0" width="64" height="32" fill="#5f8c1e" rx="1.5"/><path d="M2 2H62L56 8H8Z" fill="#b0d858"/><path d="M2 30H62L56 24H8Z" fill="#86ac26"/><path d="M2 2L8 8V24L2 30Z" fill="#96c62e"/><path d="M62 2L56 8V24L62 30Z" fill="#8bbb2a"/><rect x="8" y="8" width="48" height="16" fill="#9ccd32"/></svg>
<svg class="a" style="left:468px;top:303px" width="64" height="32" viewBox="0 0 64 32"><rect x="0" y="0" width="64" height="32" fill="#5f8c1e" rx="1.5"/><path d="M2 2H62L56 8H8Z" fill="#b0d858"/><path d="M2 30H62L56 24H8Z" fill="#86ac26"/><path d="M2 2L8 8V24L2 30Z" fill="#96c62e"/><path d="M62 2L56 8V24L62 30Z" fill="#8bbb2a"/><rect x="8" y="8" width="48" height="16" fill="#9ccd32"/></svg>
<svg class="a" style="left:532px;top:303px" width="64" height="32" viewBox="0 0 64 32"><rect x="0" y="0" width="64" height="32" fill="#5f8c1e" rx="1.5"/><path d="M2 2H62L56 8H8Z" fill="#b0d858"/><path d="M2 30H62L56 24H8Z" fill="#86ac26"/><path d="M2 2L8 8V24L2 30Z" fill="#96c62e"/><path d="M62 2L56 8V24L62 30Z" fill="#8bbb2a"/><rect x="8" y="8" width="48" height="16" fill="#9ccd32"/></svg>
<svg class="a" style="left:596px;top:303px" width="64" height="32" viewBox="0 0 64 32"><rect x="0" y="0" width="64" height="32" fill="#5f8c1e" rx="1.5"/><path d="M2 2H62L56 8H8Z" fill="#b0d858"/><path d="M2 30H62L56 24H8Z" fill="#86ac26"/><path d="M2 2L8 8V24L2 30Z" fill="#96c62e"/><path d="M62 2L56 8V24L62 30Z" fill="#8bbb2a"/><rect x="8" y="8" width="48" height="16" fill="#9ccd32"/></svg>
<svg class="a" style="left:724px;top:303px" width="64" height="32" viewBox="0 0 64 32"><rect x="0" y="0" width="64" height="32" fill="#5f8c1e" rx="1.5"/><path d="M2 2H62L56 8H8Z" fill="#b0d858"/><path d="M2 30H62L56 24H8Z" fill="#86ac26"/><path d="M2 2L8 8V24L2 30Z" fill="#96c62e"/><path d="M62 2L56 8V24L62 30Z" fill="#8bbb2a"/><rect x="8" y="8" width="48" height="16" fill="#9ccd32"/></svg>
<svg class="a" style="left:788px;top:303px" width="64" height="32" viewBox="0 0 64 32"><rect x="0" y="0" width="64" height="32" fill="#5f8c1e" rx="1.5"/><path d="M2 2H62L56 8H8Z" fill="#b0d858"/><path d="M2 30H62L56 24H8Z" fill="#86ac26"/><path d="M2 2L8 8V24L2 30Z" fill="#96c62e"/><path d="M62 2L56 8V24L62 30Z" fill="#8bbb2a"/><rect x="8" y="8" width="48" height="16" fill="#9ccd32"/></svg>
<svg class="a" style="left:852px;top:303px" width="64" height="32" viewBox="0 0 64 32"><rect x="0" y="0" width="64" height="32" fill="#5f8c1e" rx="1.5"/><path d="M2 2H62L56 8H8Z" fill="#b0d858"/><path d="M2 30H62L56 24H8Z" fill="#86ac26"/><path d="M2 2L8 8V24L2 30Z" fill="#96c62e"/><path d="M62 2L56 8V24L62 30Z" fill="#8bbb2a"/><rect x="8" y="8" width="48" height="16" fill="#9ccd32"/></svg>
<svg class="a" style="left:916px;top:303px" width="64" height="32" viewBox="0 0 64 32"><rect x="0" y="0" width="64" height="32" fill="#5f8c1e" rx="1.5"/><path d="M2 2H62L56 8H8Z" fill="#b0d858"/><path d="M2 30H62L56 24H8Z" fill="#86ac26"/><path d="M2 2L8 8V24L2 30Z" fill="#96c62e"/><path d="M62 2L56 8V24L62 30Z" fill="#8bbb2a"/><rect x="8" y="8" width="48" height="16" fill="#9ccd32"/></svg>
<svg class="a" style="left:980px;top:303px" width="64" height="32" viewBox="0 0 64 32"><rect x="0" y="0" width="64" height="32" fill="#5f8c1e" rx="1.5"/><path d="M2 2H62L56 8H8Z" fill="#b0d858"/><path d="M2 30H62L56 24H8Z" fill="#86ac26"/><path d="M2 2L8 8V24L2 30Z" fill="#96c62e"/><path d="M62 2L56 8V24L62 30Z" fill="#8bbb2a"/><rect x="8" y="8" width="48" height="16" fill="#9ccd32"/></svg>
<svg class="a" style="left:332px;top:423px" width="64" height="32" viewBox="0 0 64 32"><rect x="0" y="0" width="64" height="32" fill="#5f8c1e" rx="1.5"/><path d="M2 2H62L56 8H8Z" fill="#b0d858"/><path d="M2 30H62L56 24H8Z" fill="#86ac26"/><path d="M2 2L8 8V24L2 30Z" fill="#96c62e"/><path d="M62 2L56 8V24L62 30Z" fill="#8bbb2a"/><rect x="8" y="8" width="48" height="16" fill="#9ccd32"/></svg>
<svg class="a" style="left:396px;top:423px" width="64" height="32" viewBox="0 0 64 32"><rect x="0" y="0" width="64" height="32" fill="#5f8c1e" rx="1.5"/><path d="M2 2H62L56 8H8Z" fill="#b0d858"/><path d="M2 30H62L56 24H8Z" fill="#86ac26"/><path d="M2 2L8 8V24L2 30Z" fill="#96c62e"/><path d="M62 2L56 8V24L62 30Z" fill="#8bbb2a"/><rect x="8" y="8" width="48" height="16" fill="#9ccd32"/></svg>
<svg class="a" style="left:460px;top:423px" width="64" height="32" viewBox="0 0 64 32"><rect x="0" y="0" width="64" height="32" fill="#5f8c1e" rx="1.5"/><path d="M2 2H62L56 8H8Z" fill="#b0d858"/><path d="M2 30H62L56 24H8Z" fill="#86ac26"/><path d="M2 2L8 8V24L2 30Z" fill="#96c62e"/><path d="M62 2L56 8V24L62 30Z" fill="#8bbb2a"/><rect x="8" y="8" width="48" height="16" fill="#9ccd32"/></svg>
<svg class="a" style="left:596px;top:423px" width="64" height="32" viewBox="0 0 64 32"><rect x="0" y="0" width="64" height="32" fill="#5f8c1e" rx="1.5"/><path d="M2 2H62L56 8H8Z" fill="#b0d858"/><path d="M2 30H62L56 24H8Z" fill="#86ac26"/><path d="M2 2L8 8V24L2 30Z" fill="#96c62e"/><path d="M62 2L56 8V24L62 30Z" fill="#8bbb2a"/><rect x="8" y="8" width="48" height="16" fill="#9ccd32"/></svg>
<svg class="a" style="left:660px;top:423px" width="64" height="32" viewBox="0 0 64 32"><rect x="0" y="0" width="64" height="32" fill="#5f8c1e" rx="1.5"/><path d="M2 2H62L56 8H8Z" fill="#b0d858"/><path d="M2 30H62L56 24H8Z" fill="#86ac26"/><path d="M2 2L8 8V24L2 30Z" fill="#96c62e"/><path d="M62 2L56 8V24L62 30Z" fill="#8bbb2a"/><rect x="8" y="8" width="48" height="16" fill="#9ccd32"/></svg>
<svg class="a" style="left:724px;top:423px" width="64" height="32" viewBox="0 0 64 32"><rect x="0" y="0" width="64" height="32" fill="#5f8c1e" rx="1.5"/><path d="M2 2H62L56 8H8Z" fill="#b0d858"/><path d="M2 30H62L56 24H8Z" fill="#86ac26"/><path d="M2 2L8 8V24L2 30Z" fill="#96c62e"/><path d="M62 2L56 8V24L62 30Z" fill="#8bbb2a"/><rect x="8" y="8" width="48" height="16" fill="#9ccd32"/></svg>
<svg class="a" style="left:860px;top:423px" width="64" height="32" viewBox="0 0 64 32"><rect x="0" y="0" width="64" height="32" fill="#5f8c1e" rx="1.5"/><path d="M2 2H62L56 8H8Z" fill="#b0d858"/><path d="M2 30H62L56 24H8Z" fill="#86ac26"/><path d="M2 2L8 8V24L2 30Z" fill="#96c62e"/><path d="M62 2L56 8V24L62 30Z" fill="#8bbb2a"/><rect x="8" y="8" width="48" height="16" fill="#9ccd32"/></svg>
<svg class="a" style="left:924px;top:423px" width="64" height="32" viewBox="0 0 64 32"><rect x="0" y="0" width="64" height="32" fill="#5f8c1e" rx="1.5"/><path d="M2 2H62L56 8H8Z" fill="#b0d858"/><path d="M2 30H62L56 24H8Z" fill="#86ac26"/><path d="M2 2L8 8V24L2 30Z" fill="#96c62e"/><path d="M62 2L56 8V24L62 30Z" fill="#8bbb2a"/><rect x="8" y="8" width="48" height="16" fill="#9ccd32"/></svg>
<svg class="a" style="left:988px;top:423px" width="64" height="32" viewBox="0 0 64 32"><rect x="0" y="0" width="64" height="32" fill="#5f8c1e" rx="1.5"/><path d="M2 2H62L56 8H8Z" fill="#b0d858"/><path d="M2 30H62L56 24H8Z" fill="#86ac26"/><path d="M2 2L8 8V24L2 30Z" fill="#96c62e"/><path d="M62 2L56 8V24L62 30Z" fill="#8bbb2a"/><rect x="8" y="8" width="48" height="16" fill="#9ccd32"/></svg>
<div style="left:292px;top:191px;width:800px;height:32px;background:#cde4fb;border:2px solid #2f45a0"></div>
<div style="left:260px;top:223px;width:32px;height:608px;background:#cde4fb;border:2px solid #2f45a0;border-right-color:#4a5a98"></div>
<div style="left:1092px;top:223px;width:32px;height:608px;background:#cde4fb;border:2px solid #2f45a0;border-left-color:#4a5a98"></div>
<div style="left:292px;top:221px;width:800px;height:2px;background:#4a5ca0"></div>
<div style="left:284px;top:215px;width:808px;height:6px;background:#a2aebb"></div>
<div style="left:284px;top:215px;width:8px;height:8px;background:#7c7c84"></div>
<div style="left:1092px;top:215px;width:8px;height:8px;background:#7c7c84"></div>
<div style="left:284px;top:223px;width:6px;height:606px;background:#a2aebb"></div>
<div style="left:1094px;top:223px;width:6px;height:606px;background:#a2aebb"></div>
<div style="left:292px;top:823px;width:800px;height:7px;background:#6f90aa;filter:blur(1.2px)"></div>
<svg class="a" style="left:676px;top:594px" width="33" height="33" viewBox="0 0 33 33"><defs><radialGradient id="bg" cx="0.4" cy="0.35" r="0.7"><stop offset="0" stop-color="#ffffff"/><stop offset="0.6" stop-color="#e4e4e4"/><stop offset="1" stop-color="#a8a8a8"/></radialGradient></defs><circle cx="16" cy="16" r="10" fill="url(#bg)" stroke="#9a9a9a" stroke-width="1"/><g fill="#0000ff"><rect x="1" y="1" width="5" height="5"/><rect x="13.5" y="1" width="5" height="5"/><rect x="27" y="1" width="5" height="5"/><rect x="1" y="13.5" width="5" height="5"/><rect x="27" y="13.5" width="5" height="5"/><rect x="1" y="27" width="5" height="5"/><rect x="13.5" y="27" width="5" height="5"/><rect x="27" y="27" width="5" height="5"/></g></svg>
<svg class="a" style="left:644px;top:784px" width="96" height="22" viewBox="0 0 96 22"><defs><clipPath id="pc"><rect x="0.5" y="0.5" width="95" height="21" rx="10.5"/></clipPath></defs><g clip-path="url(#pc)"><rect x="0" y="0" width="96" height="11" fill="#ff3c3c"/><rect x="0" y="11" width="96" height="11" fill="#e41010"/><rect x="20" y="0" width="56" height="22" fill="#b8b8b8"/><rect x="20" y="1.5" width="56" height="19" fill="#d8d8d8"/><rect x="20" y="2" width="56" height="8" fill="#dedede"/></g><rect x="0.5" y="0.5" width="95" height="21" rx="10.5" fill="none" stroke="#9a1010" stroke-width="1"/><rect x="20" y="0" width="56" height="1.2" fill="#b0b0b0"/><rect x="20" y="20.8" width="56" height="1.2" fill="#b0b0b0"/></svg>
<div style="left:1297px;top:156px;width:260px;height:773px;background:#dcdcdc"></div>
<div style="left:1303px;top:163px;width:23px;height:58px;background:#f4f4f4;border:1px solid #c4c4c4;border-right:none;border-radius:3px 0 0 3px"></div>
<div style="left:1303px;top:224px;width:23px;height:71px;background:linear-gradient(90deg,#f0f0f0,#e4e4e4);border:1px solid #c4c4c4;border-right:none;border-radius:3px 0 0 3px"></div>
<div class="t" style="left:1307px;top:216px;transform:rotate(-90deg);transform-origin:0 0;color:#333;width:60px">Объекты</div>
<div class="t" style="left:1307px;top:290px;transform:rotate(-90deg);transform-origin:0 0;color:#333;width:80px">Прототипы</div>
<div class="btn" style="left:1328px;top:158px;width:211px;height:25px;"></div>
<div class="t" style="left:1336px;top:163px;width:150px;height:16px;color:#333">Иконки + текст</div>
<svg class="a" style="left:1522px;top:168px" width="9" height="6"><path d="M0 0h9L4.5 5.5z" fill="#333"/></svg>
<div class="inp" style="left:1328px;top:185px;width:211px;height:24px;"></div>
<div class="t" style="left:1336px;top:189px;width:150px;height:16px;color:#b0b0b0">Поиск компонентов</div>
<div style="left:1538px;top:156px;width:18px;height:773px;background:linear-gradient(90deg,#f8f8f8,#ececec);border-left:1px solid #d0d0d0"></div>
<div style="left:1543px;top:170px;width:10px;height:423px;border:1px solid #c0c0c0;border-radius:5px;background:linear-gradient(90deg,#f8f8f8,#e6e6e6)"></div>
<svg class="a" style="left:1543px;top:158px" width="10" height="7"><path d="M1 6L5 2L9 6" stroke="#777" fill="none" stroke-width="1.2"/></svg>
<svg class="a" style="left:1543px;top:918px" width="10" height="7"><path d="M1 1L5 5L9 1" stroke="#777" fill="none" stroke-width="1.2"/></svg>
<div style="left:1329px;top:212px;width:209px;height:476px;background:#f0f0f0;border:1px solid #c8c8c8;border-radius:3px"></div>
<div style="left:1330px;top:213px;width:207px;height:24px;background:linear-gradient(#f4f4f4,#e2e2e2);border-bottom:1px solid #c8c8c8"></div>
<svg class="a" style="left:1338px;top:222px" width="9" height="7"><path d="M0 0h9L4.5 6z" fill="#444"/></svg>
<div class="t" style="left:1353px;top:217px;width:150px;height:16px;color:#333;font-weight:bold">Главное</div>
<div class="item" style="left:1332px;top:239px;width:203px;height:27px;"></div>
<svg class="a" style="left:1341px;top:245px" width="16" height="16" viewBox="0 0 16 16"><defs><linearGradient id="kb" x1="0" y1="0" x2="0" y2="1"><stop offset="0" stop-color="#d8e8f8"/><stop offset="1" stop-color="#7aa0e0"/></linearGradient></defs><rect x="0.5" y="3.5" width="15" height="10" rx="2" fill="url(#kb)" stroke="#4a70b0"/></svg>
<div class="t" style="left:1361px;top:245px;width:170px;height:16px;color:#303030">Кнопка</div>
<div class="item" style="left:1332px;top:267px;width:203px;height:27px;"></div>
<svg class="a" style="left:1341px;top:273px" width="16" height="16" viewBox="0 0 16 16"><rect x="0.5" y="3.5" width="15" height="9" rx="1" fill="#fff" stroke="#666"/><text x="8" y="11" font-size="6.5" font-weight="bold" text-anchor="middle" fill="#111" font-family="Liberation Mono">OK</text></svg>
<div class="t" style="left:1361px;top:273px;width:170px;height:16px;color:#303030">Плоская кнопка</div>
<div class="item" style="left:1332px;top:295px;width:203px;height:27px;"></div>
<svg class="a" style="left:1341px;top:301px" width="16" height="16" viewBox="0 0 16 16"><rect x="0.5" y="3.5" width="15" height="9" rx="4" fill="#eee" stroke="#888"/><path d="M8 4v8" stroke="#888"/></svg>
<div class="t" style="left:1361px;top:301px;width:170px;height:16px;color:#303030">Кнопка-переключатель</div>
<div class="item" style="left:1332px;top:323px;width:203px;height:27px;"></div>
<svg class="a" style="left:1341px;top:329px" width="16" height="16" viewBox="0 0 16 16"><path d="M0.5 0.5H15.5V5H14L13 3H9.5V13L11 13.5V15.5H5V13.5L6.5 13V3H3L2 5H0.5Z" fill="#f4f4f4" stroke="#7a7a7a" stroke-width="1"/></svg>
<div class="t" style="left:1361px;top:329px;width:170px;height:16px;color:#303030">Текст</div>
<div class="item" style="left:1332px;top:351px;width:203px;height:27px;"></div>
<svg class="a" style="left:1341px;top:357px" width="16" height="16" viewBox="0 0 16 16"><rect x="0.75" y="4.75" width="8" height="6" rx="3" fill="none" stroke="#666" stroke-width="1.5"/><rect x="7.25" y="4.75" width="8" height="6" rx="3" fill="none" stroke="#666" stroke-width="1.5"/><path d="M4 7.75H12" stroke="#666" stroke-width="1.3"/></svg>
<div class="t" style="left:1361px;top:357px;width:170px;height:16px;color:#303030">Ссылка</div>
<div class="item" style="left:1332px;top:379px;width:203px;height:27px;"></div>
<svg class="a" style="left:1341px;top:385px" width="16" height="16" viewBox="0 0 16 16"><defs><linearGradient id="ig" x1="0" y1="0" x2="0" y2="1"><stop offset="0" stop-color="#fafafa"/><stop offset="1" stop-color="#d8d8d8"/></linearGradient></defs><rect x="1.5" y="3.5" width="14" height="9" fill="url(#ig)" stroke="#999"/><path d="M3.5 1v14M1.5 1h4M1.5 15h4" stroke="#333" stroke-width="1"/></svg>
<div class="t" style="left:1361px;top:385px;width:170px;height:16px;color:#303030">Поле ввода</div>
<div class="item" style="left:1332px;top:407px;width:203px;height:27px;"></div>
<svg class="a" style="left:1341px;top:413px" width="16" height="16" viewBox="0 0 16 16"><rect x="0.5" y="0.5" width="15" height="14" fill="#fff" stroke="#777"/><path d="M3 3.5h2M6 3.5h3M10 3.5h3M3 6.5h3M7 6.5h2M10 6.5h3M3 9.5h2M6 9.5h4M11 9.5h2M3 12h3M7 12h3" stroke="#333" stroke-width="1"/></svg>
<div class="t" style="left:1361px;top:413px;width:170px;height:16px;color:#303030">Многострочное поле</div>
<div class="item" style="left:1332px;top:435px;width:203px;height:27px;"></div>
<svg class="a" style="left:1341px;top:441px" width="16" height="16" viewBox="0 0 16 16"><defs><linearGradient id="ckg" x1="0" y1="0" x2="0" y2="1"><stop offset="0" stop-color="#e8eef4"/><stop offset="1" stop-color="#b8c8d8"/></linearGradient></defs><rect x="0.5" y="2.5" width="10" height="10" fill="url(#ckg)" stroke="#8a9ab0"/><path d="M2.5 7.5l2.2 2.5l4-6" stroke="#2a60b0" stroke-width="1.8" fill="none"/><rect x="12.5" y="2.5" width="3" height="3" fill="#eee" stroke="#999"/><rect x="12.5" y="8.5" width="3" height="3" fill="#eee" stroke="#999"/></svg>
<div class="t" style="left:1361px;top:441px;width:170px;height:16px;color:#303030">Флажок</div>
<div class="item" style="left:1332px;top:463px;width:203px;height:27px;"></div>
<svg class="a" style="left:1341px;top:469px" width="16" height="16" viewBox="0 0 16 16"><rect x="0.5" y="0.5" width="15" height="4" fill="#f0f0f0" stroke="#888"/><path d="M13 1.5v2" stroke="#333"/><rect x="2.5" y="5.5" width="13" height="10" fill="#fff" stroke="#777"/><path d="M4 8.5h6M4 10.5h6M4 12.5h6" stroke="#555"/><path d="M12.5 6v9" stroke="#999"/><path d="M13 8l1-1.2 1 1.2zM13 13l1 1.2 1-1.2z" fill="#222"/></svg>
<div class="t" style="left:1361px;top:469px;width:170px;height:16px;color:#303030">Выпадающий список</div>
<div class="item" style="left:1332px;top:491px;width:203px;height:27px;"></div>
<svg class="a" style="left:1341px;top:497px" width="16" height="16" viewBox="0 0 16 16"><rect x="0.5" y="0.5" width="15" height="15" fill="#fff" stroke="#777"/><path d="M3 3.5h4M3 6h3M3 8.5h4M3 11h3M3 13.5h4" stroke="#444"/><path d="M10.5 0.5v15" stroke="#999"/><path d="M11.5 5l2-2.5 2 2.5zM11.5 11l2 2.5 2-2.5z" fill="#111"/></svg>
<div class="t" style="left:1361px;top:497px;width:170px;height:16px;color:#303030">Список</div>
<div class="item" style="left:1332px;top:519px;width:203px;height:27px;"></div>
<svg class="a" style="left:1341px;top:525px" width="16" height="16" viewBox="0 0 16 16"><rect x="0.5" y="0.5" width="15" height="15" fill="#fff" stroke="#777"/><path d="M4 4v8M4 8h3M4 12h3" stroke="#666"/><ellipse cx="4" cy="3.5" rx="2.2" ry="1.6" fill="#5a9ae0" stroke="#2a5aa8" stroke-width="0.8"/><ellipse cx="7.5" cy="8" rx="2.2" ry="1.6" fill="#5a9ae0" stroke="#2a5aa8" stroke-width="0.8"/><ellipse cx="7.5" cy="12" rx="2.2" ry="1.6" fill="#5a9ae0" stroke="#2a5aa8" stroke-width="0.8"/><path d="M7 3.5h6M10.5 8h3M10.5 12h3" stroke="#555"/></svg>
<div class="t" style="left:1361px;top:525px;width:170px;height:16px;color:#303030">Дерево</div>
<div class="item" style="left:1332px;top:547px;width:203px;height:27px;"></div>
<svg class="a" style="left:1341px;top:553px" width="16" height="16" viewBox="0 0 16 16"><defs><linearGradient id="imgr" x1="0" y1="0" x2="1" y2="1"><stop offset="0" stop-color="#1a4a90"/><stop offset="1" stop-color="#d0e4f8"/></linearGradient></defs><rect x="1.5" y="2.5" width="13" height="10" fill="#fff" stroke="#4a70c8"/><rect x="3" y="4" width="10" height="7" fill="url(#imgr)"/><g fill="#fff" stroke="#4a70c8" stroke-width="0.8"><circle cx="1.5" cy="2.5" r="1.2"/><circle cx="14.5" cy="2.5" r="1.2"/><circle cx="1.5" cy="12.5" r="1.2"/><circle cx="14.5" cy="12.5" r="1.2"/></g></svg>
<div class="t" style="left:1361px;top:553px;width:170px;height:16px;color:#303030">Изображение</div>
<div class="item" style="left:1332px;top:575px;width:203px;height:27px;"></div>
<svg class="a" style="left:1341px;top:581px" width="16" height="16" viewBox="0 0 16 16"><path d="M5 4L3 0.5M9 4l3-3.5" stroke="#333" stroke-width="1"/><rect x="0.5" y="4" width="15.5" height="11.5" rx="1.5" fill="#4a4a4a" stroke="#222"/><rect x="2" y="5.5" width="10" height="8.5" rx="1" fill="#5a9ad8"/><path d="M3 10l4-2 4 2" stroke="#a8d0f0" fill="none"/><g fill="#bbb"><rect x="13" y="6" width="1.5" height="1.5"/><rect x="13" y="9" width="1.5" height="1.5"/><rect x="13" y="12" width="1.5" height="1.5"/></g></svg>
<div class="t" style="left:1361px;top:581px;width:170px;height:16px;color:#303030">Видео плеер</div>
<div class="item" style="left:1332px;top:603px;width:203px;height:27px;"></div>
<svg class="a" style="left:1341px;top:609px" width="16" height="16" viewBox="0 0 16 16"><rect x="0.5" y="4.5" width="15" height="7" fill="#fff" stroke="#aaa"/><rect x="1" y="5" width="9" height="6" fill="#6aa8e8"/><path d="M2 11l4-6M5 11l4-6M8 11l2-3" stroke="#c8e0f8" stroke-width="1"/></svg>
<div class="t" style="left:1361px;top:609px;width:170px;height:16px;color:#303030">Прогресс</div>
<div class="item" style="left:1332px;top:631px;width:203px;height:27px;"></div>
<svg class="a" style="left:1341px;top:637px" width="16" height="16" viewBox="0 0 16 16"><path d="M0 8.5h16" stroke="#999" stroke-width="1.5"/><path d="M5.5 12.5V6.5L8 4L10.5 6.5V12.5Z" fill="#fff" stroke="#888"/></svg>
<div class="t" style="left:1361px;top:637px;width:170px;height:16px;color:#303030">Ползунок</div>
<div class="item" style="left:1332px;top:659px;width:203px;height:27px;"></div>
<svg class="a" style="left:1341px;top:665px" width="16" height="16" viewBox="0 0 16 16"><rect x="0.5" y="3.5" width="15" height="10" fill="#eef4fa" stroke="#8aa0b8"/><circle cx="4.5" cy="7" r="1.6" fill="#333"/><path d="M2.5 12V10.5Q4.5 8.5 6.5 10.5V12Z" fill="#333"/><path d="M8.5 6.5h5M8.5 8.5h5M8.5 10.5h4" stroke="#aab"/></svg>
<div class="t" style="left:1361px;top:665px;width:170px;height:16px;color:#303030">Фрагмент формы</div>
<div style="left:1329px;top:691px;width:209px;height:252px;background:#f0f0f0;border:1px solid #c8c8c8;border-radius:3px"></div>
<div style="left:1330px;top:692px;width:207px;height:24px;background:linear-gradient(#f4f4f4,#e2e2e2);border-bottom:1px solid #c8c8c8"></div>
<svg class="a" style="left:1338px;top:701px" width="9" height="7"><path d="M0 0h9L4.5 6z" fill="#444"/></svg>
<div class="t" style="left:1353px;top:696px;width:150px;height:16px;color:#333;font-weight:bold">Дополнительно</div>
<div class="item" style="left:1332px;top:718px;width:203px;height:27px;"></div>
<svg class="a" style="left:1341px;top:724px" width="16" height="16" viewBox="0 0 16 16"><rect x="0.5" y="4.5" width="15" height="8" fill="#fff" stroke="#8a9ab0"/><path d="M3 8.5h1.5M6 8.5h1.5M9 8.5h1.5" stroke="#333" stroke-width="1.5"/></svg>
<div class="t" style="left:1361px;top:724px;width:170px;height:16px;color:#303030">Поле для пароля</div>
<div class="item" style="left:1332px;top:746px;width:203px;height:27px;"></div>
<svg class="a" style="left:1341px;top:752px" width="16" height="16" viewBox="0 0 16 16"><rect x="0.5" y="4.5" width="15" height="8" fill="#fff" stroke="#333"/><text x="8" y="11" font-size="6.5" font-weight="bold" text-anchor="middle" fill="#111" font-family="Liberation Mono">%F</text></svg>
<div class="t" style="left:1361px;top:752px;width:170px;height:16px;color:#303030">Поле с маской</div>
<div class="item" style="left:1332px;top:774px;width:203px;height:27px;"></div>
<svg class="a" style="left:1341px;top:780px" width="16" height="16" viewBox="0 0 16 16"><rect x="0.5" y="4.5" width="15" height="8" fill="#fff" stroke="#333"/><text x="8" y="11" font-size="6.5" font-weight="bold" text-anchor="middle" fill="#111" font-family="Liberation Sans">123</text></svg>
<div class="t" style="left:1361px;top:780px;width:170px;height:16px;color:#303030">Поле для чисел</div>
<div class="item" style="left:1332px;top:802px;width:203px;height:27px;"></div>
<svg class="a" style="left:1341px;top:808px" width="16" height="16" viewBox="0 0 16 16"><rect x="0.5" y="1.5" width="15" height="14" fill="#fff" stroke="#777"/><rect x="0.5" y="1.5" width="15" height="4" fill="#e03030"/><text x="8" y="14" font-size="7" text-anchor="middle" fill="#333" font-family="Liberation Sans">31</text></svg>
<div class="t" style="left:1361px;top:808px;width:170px;height:16px;color:#303030">Поле для даты</div>
<div class="item" style="left:1332px;top:830px;width:203px;height:27px;"></div>
<svg class="a" style="left:1341px;top:836px" width="16" height="16" viewBox="0 0 16 16"><rect x="0.5" y="0.5" width="15" height="15" fill="#fff" stroke="#999"/><g><rect x="2" y="2" width="3.5" height="3.5" fill="#e04040"/><rect x="6.3" y="2" width="3.5" height="3.5" fill="#f0a030"/><rect x="10.6" y="2" width="3.5" height="3.5" fill="#e0e040"/><rect x="2" y="6.3" width="3.5" height="3.5" fill="#40b040"/><rect x="6.3" y="6.3" width="3.5" height="3.5" fill="#40a0e0"/><rect x="10.6" y="6.3" width="3.5" height="3.5" fill="#8040e0"/><rect x="2" y="10.6" width="3.5" height="3.5" fill="#e040a0"/><rect x="6.3" y="10.6" width="3.5" height="3.5" fill="#60d0a0"/><rect x="10.6" y="10.6" width="3.5" height="3.5" fill="#a0a0a0"/></g></svg>
<div class="t" style="left:1361px;top:836px;width:170px;height:16px;color:#303030">Поле для цвета</div>
<div class="item" style="left:1332px;top:858px;width:203px;height:27px;"></div>
<svg class="a" style="left:1341px;top:864px" width="16" height="16" viewBox="0 0 16 16"><g stroke="#777" stroke-width="1.3"><path d="M8 1v4M8 11v4M1 8h4M11 8h4M3 3l2.5 2.5M10.5 10.5L13 13M13 3l-2.5 2.5M5.5 10.5L3 13"/></g></svg>
<div class="t" style="left:1361px;top:864px;width:170px;height:16px;color:#303030">Индикатор загрузки</div>
<div class="item" style="left:1332px;top:886px;width:203px;height:27px;"></div>
<svg class="a" style="left:1341px;top:892px" width="16" height="16" viewBox="0 0 16 16"><path d="M0 8h16" stroke="#666"/></svg>
<div class="t" style="left:1361px;top:892px;width:170px;height:16px;color:#303030">Разделитель</div>
<div class="item" style="left:1332px;top:914px;width:203px;height:27px;"></div>
<svg class="a" style="left:1341px;top:920px" width="16" height="16" viewBox="0 0 16 16"><rect x="0.5" y="2.5" width="15" height="13" fill="#f4f8fc" stroke="#8898a8"/><rect x="1" y="3" width="14" height="2.5" fill="#c8d8e8"/><circle cx="8" cy="11" r="4.5" fill="#7ab8e8" stroke="#3a78b8"/></svg>
<div class="t" style="left:1361px;top:920px;width:170px;height:16px;color:#303030">Web Браузер</div>
<div style="left:1297px;top:927px;width:260px;height:2px;background:#c8c8c8"></div>
<div style="left:1px;top:927px;width:1556px;height:2px;background:#c8c8c8"></div>
<div style="left:0px;top:929px;width:1558px;height:2px;background:#4b4a48"></div>
<div style="left:1556px;top:31px;width:2px;height:900px;background:#4b4a48"></div>
</body></html>
